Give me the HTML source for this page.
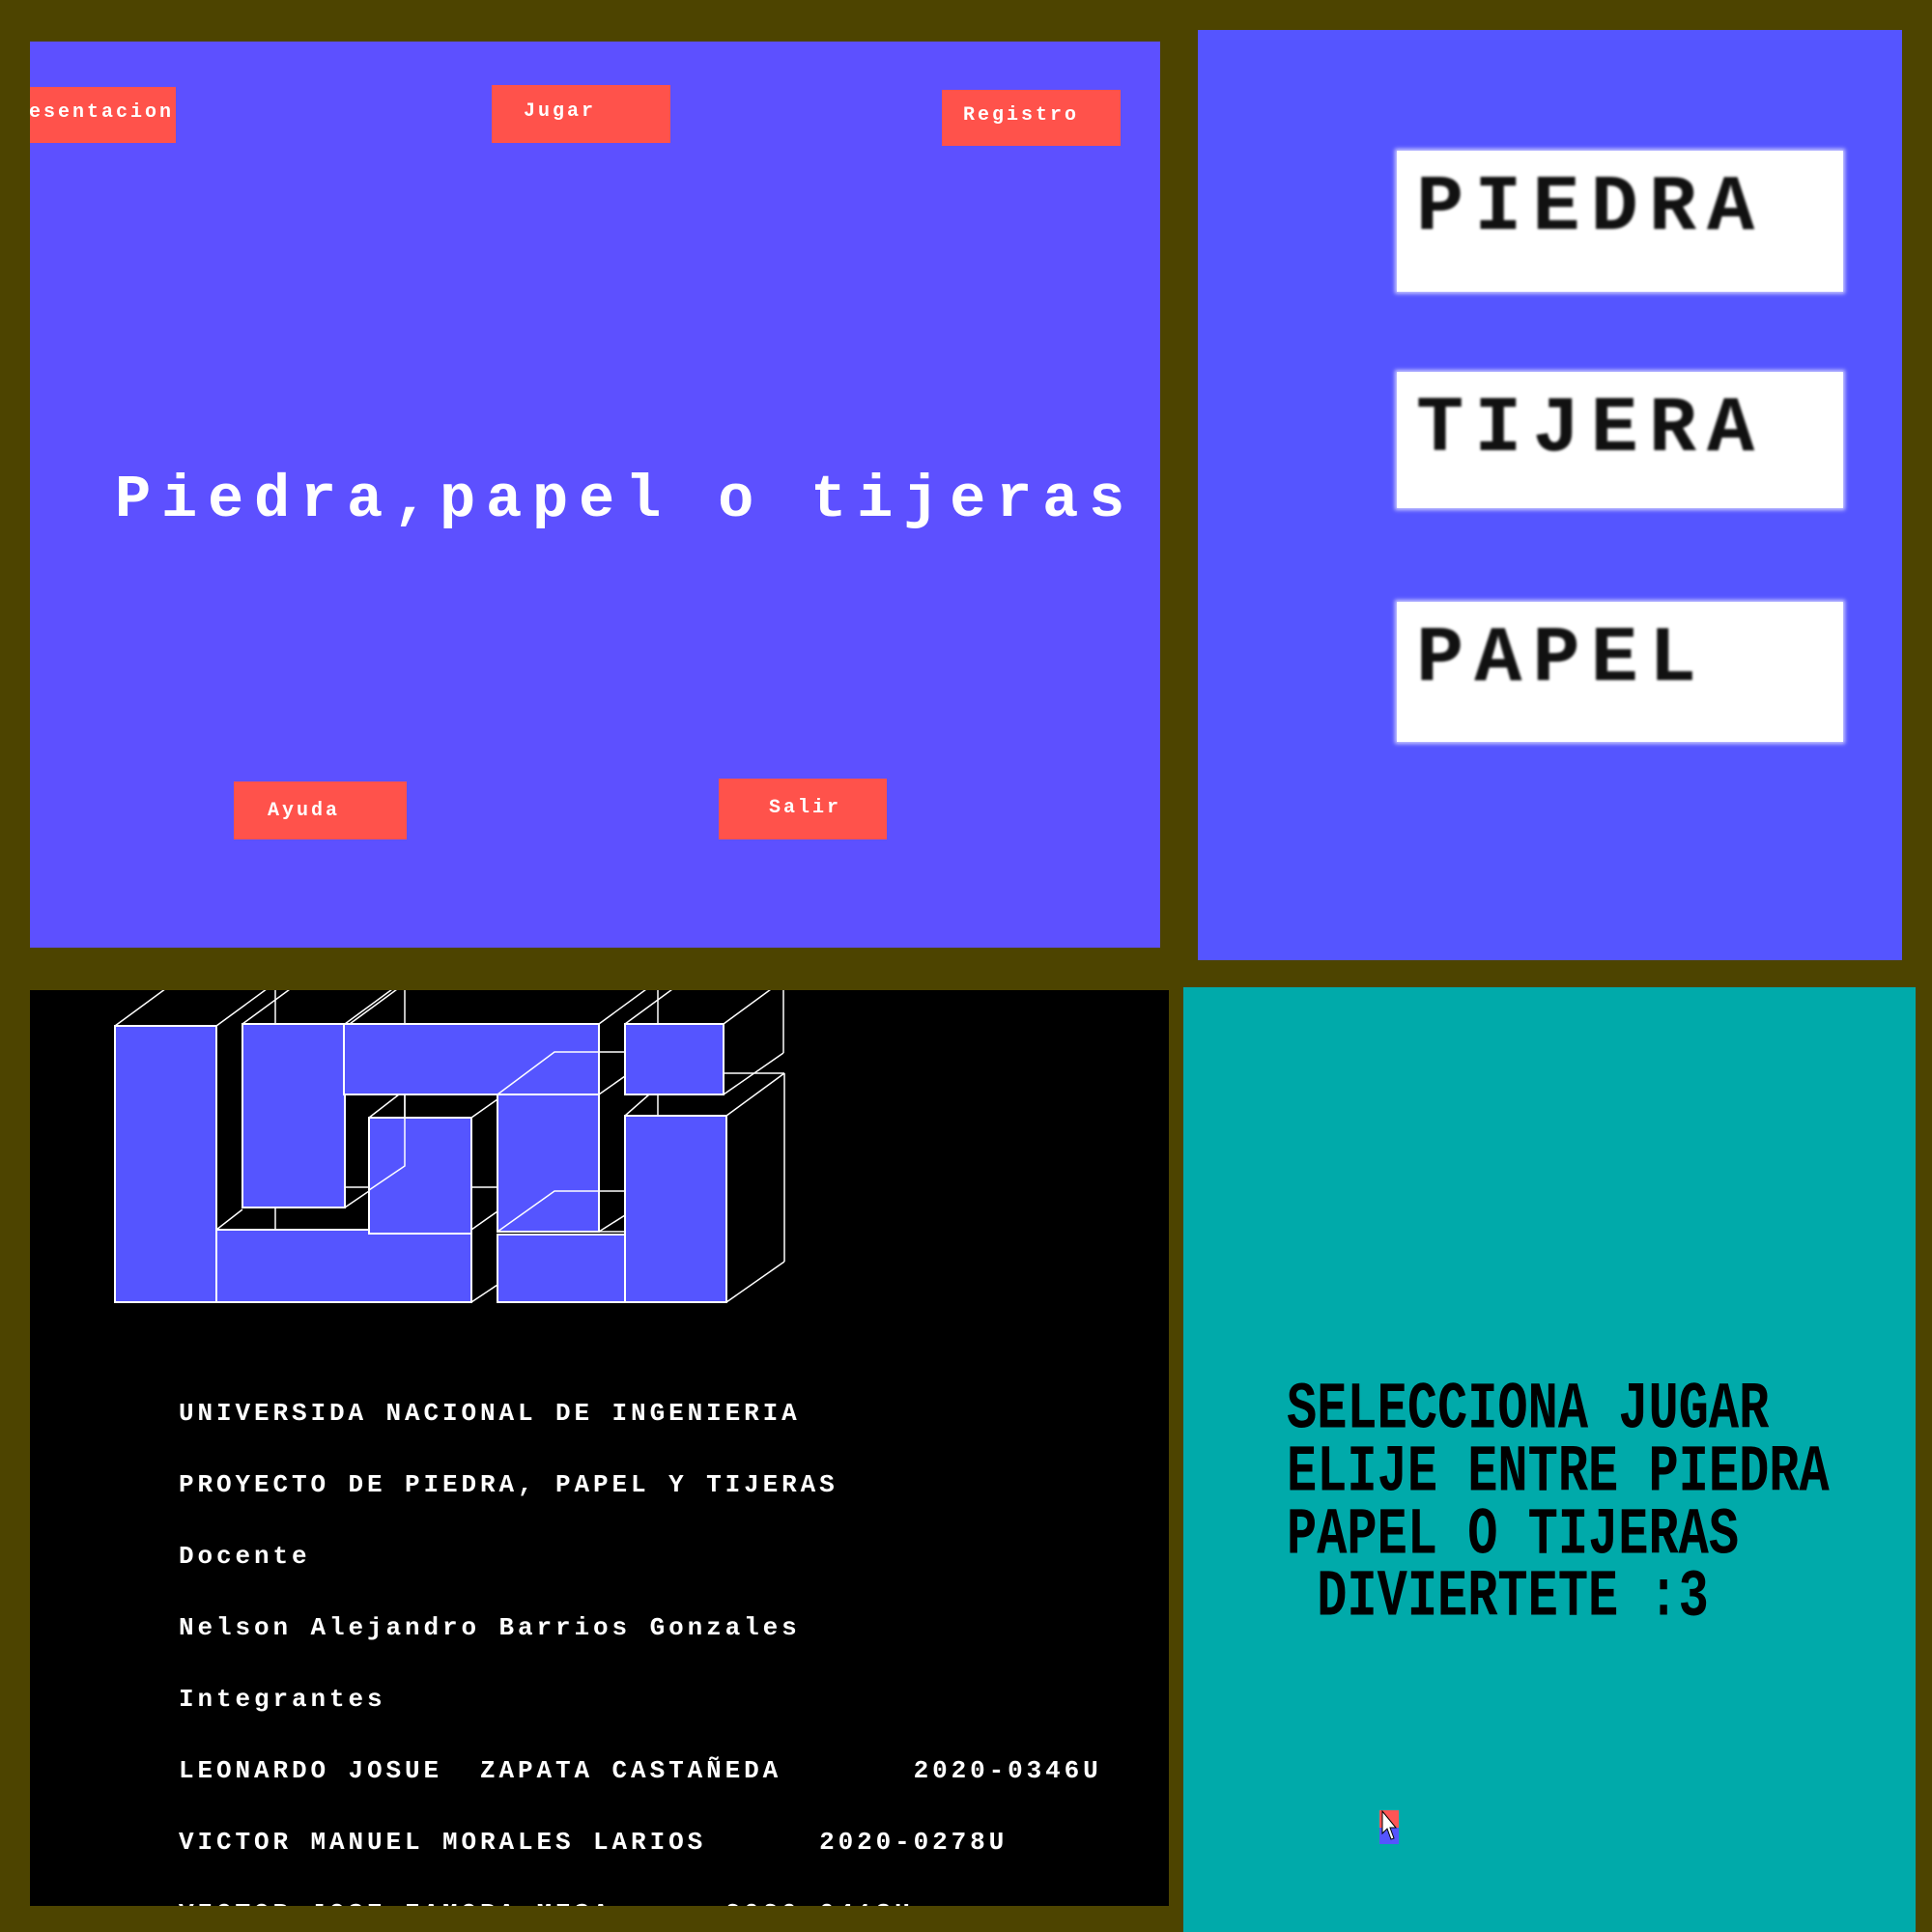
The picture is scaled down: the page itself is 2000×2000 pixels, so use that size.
<!DOCTYPE html>
<html><head><meta charset="utf-8"><style>
*{margin:0;padding:0;box-sizing:border-box}
body{width:2000px;height:2000px;background:#4d4400;position:relative;overflow:hidden;font-family:"Liberation Mono",monospace}
.p{position:absolute;overflow:hidden}
.btn{position:absolute;background:#ff524b;color:#fff;font-weight:bold;font-size:20px;letter-spacing:3px;white-space:pre;line-height:1}
.btn span{position:absolute}
.box{position:absolute;background:#fff;box-shadow:0 0 4px 2px rgba(255,255,255,.7);left:206px;width:462px}
.box span{position:absolute;left:20px;font-family:"Liberation Mono",monospace;font-weight:bold;font-size:82px;color:#111;letter-spacing:11px;line-height:1;filter:blur(1.2px)}
.bl{position:absolute;left:154px;color:#fff;font-size:26px;letter-spacing:3.9px;white-space:pre;line-height:1;font-weight:bold}
.br{position:absolute;left:107px;color:#000;font-size:52px;font-weight:bold;white-space:pre;line-height:1;transform-origin:0 0;transform:scaleY(1.32)}
</style></head><body>
<div class="p" style="left:31px;top:43px;width:1170px;height:938px;background:#5d50ff">
  <div class="btn" style="left:-1px;top:47px;width:152px;height:58px"><span style="left:0;top:17px">esentacion</span></div>
  <div class="btn" style="left:478px;top:45px;width:185px;height:60px"><span style="left:33px;top:18px">Jugar</span></div>
  <div class="btn" style="left:944px;top:50px;width:185px;height:58px"><span style="left:22px;top:17px">Registro</span></div>
  <div class="btn" style="left:211px;top:766px;width:179px;height:60px"><span style="left:35px;top:21px">Ayuda</span></div>
  <div class="btn" style="left:713px;top:763px;width:174px;height:63px"><span style="left:52px;top:21px">Salir</span></div>
  <div style="position:absolute;left:88px;top:444px;color:#fff;font-size:62px;font-weight:bold;letter-spacing:10.8px;white-space:pre;line-height:1">Piedra,papel o tijeras</div>
</div>
<div class="p" style="left:1240px;top:31px;width:729px;height:963px;background:#5555ff">
  <div class="box" style="top:125px;height:146px"><span style="top:19px">PIEDRA</span></div>
  <div class="box" style="top:354px;height:141px"><span style="top:19px">TIJERA</span></div>
  <div class="box" style="top:592px;height:145px"><span style="top:19px">PAPEL</span></div>
</div>
<div class="p" style="left:31px;top:1025px;width:1179px;height:948px;background:#000">
<svg width="1179" height="948" viewBox="31 1025 1179 948" style="position:absolute;left:0;top:0" fill="none" stroke="#fff" stroke-width="2">
 <g stroke-width="1.5">
  <line x1="119" y1="1062" x2="179" y2="1018"/><line x1="224" y1="1062" x2="284" y2="1018"/>
  <line x1="251" y1="1060" x2="311" y2="1016"/><line x1="357" y1="1060" x2="417" y2="1016"/>
  <line x1="362" y1="1060" x2="422" y2="1016"/>
  <line x1="620" y1="1060" x2="680" y2="1016"/><line x1="647" y1="1060" x2="707" y2="1016"/>
  <line x1="749" y1="1060" x2="809" y2="1016"/>
  <line x1="285" y1="1025" x2="285" y2="1060"/><line x1="419" y1="1025" x2="419" y2="1060"/>
  <line x1="681" y1="1025" x2="681" y2="1060"/><line x1="811" y1="1025" x2="811" y2="1090"/>
  <line x1="811" y1="1090" x2="749" y2="1133"/>
  <line x1="515" y1="1133" x2="574" y2="1089"/><line x1="574" y1="1089" x2="647" y2="1089"/>
  <line x1="620" y1="1133" x2="647" y2="1114"/>
  <line x1="681" y1="1133" x2="681" y2="1155"/>
  <line x1="647" y1="1155" x2="672" y2="1133"/>
  <line x1="419" y1="1133" x2="419" y2="1207"/><line x1="419" y1="1207" x2="382" y2="1232"/>
  <line x1="382" y1="1157" x2="413" y2="1133"/><line x1="488" y1="1157" x2="515" y2="1138"/>
  <line x1="357" y1="1229" x2="382" y2="1229"/><line x1="488" y1="1229" x2="515" y2="1229"/>
  <line x1="357" y1="1250" x2="382" y2="1233"/>
  <line x1="285" y1="1250" x2="285" y2="1273"/><line x1="224" y1="1273" x2="251" y2="1252"/>
  <line x1="488" y1="1273" x2="515" y2="1254"/><line x1="488" y1="1348" x2="515" y2="1330"/>
  <line x1="515" y1="1275" x2="574" y2="1233"/><line x1="574" y1="1233" x2="647" y2="1233"/>
  <line x1="620" y1="1275" x2="647" y2="1275"/><line x1="620" y1="1275" x2="647" y2="1258"/>
  <line x1="752" y1="1155" x2="812" y2="1111"/><line x1="749" y1="1111" x2="812" y2="1111"/>
  <line x1="812" y1="1111" x2="812" y2="1306"/><line x1="812" y1="1306" x2="752" y2="1348"/>
 </g>
 <g fill="#5555ff">
  <rect x="119" y="1062" width="105" height="286"/>
  <rect x="251" y="1060" width="106" height="190"/>
  <rect x="356" y="1060" width="264" height="73"/>
  <rect x="224" y="1273" width="264" height="75"/>
  <rect x="382" y="1157" width="106" height="120"/>
  <rect x="515" y="1133" width="105" height="142"/>
  <rect x="515" y="1278" width="132" height="70"/>
  <rect x="647" y="1060" width="102" height="73"/>
  <rect x="647" y="1155" width="105" height="193"/>
 </g>
 <g stroke-width="1.5">
  <polyline points="515,1133 574,1089 620,1089"/>
  <polyline points="515,1275 574,1233 620,1233"/>
  <polyline points="419,1133 419,1207 382,1232"/>
 </g>
</svg>
<div class="bl" style="top:425px">UNIVERSIDA NACIONAL DE INGENIERIA</div>
<div class="bl" style="top:499px">PROYECTO DE PIEDRA, PAPEL Y TIJERAS</div>
<div class="bl" style="top:573px">Docente</div>
<div class="bl" style="top:647px">Nelson Alejandro Barrios Gonzales</div>
<div class="bl" style="top:721px">Integrantes</div>
<div class="bl" style="top:795px">LEONARDO JOSUE  ZAPATA CASTAÑEDA       2020-0346U</div>
<div class="bl" style="top:869px">VICTOR MANUEL MORALES LARIOS      2020-0278U</div>
<div class="bl" style="top:943px">VICTOR JOSE ZAMORA MESA      2020-0418U</div>
</div>
<div class="p" style="left:1225px;top:1022px;width:758px;height:978px;background:#00aaaa">
<div class="br" style="top:404px">SELECCIONA JUGAR</div>
<div class="br" style="top:469px">ELIJE ENTRE PIEDRA</div>
<div class="br" style="top:534px">PAPEL O TIJERAS</div>
<div class="br" style="top:598px"> DIVIERTETE :3</div>
<div style="position:absolute;left:203px;top:852px;width:20px;height:18px;background:#ff5555"></div>
<div style="position:absolute;left:203px;top:870px;width:20px;height:17px;background:#5555ff"></div>
<svg style="position:absolute;left:203px;top:852px" width="20" height="35"><path d="M3 1 L3 24 L8 19 L12 30 L15 29 L11 18 L17 18 Z" fill="#fff" stroke="#000" stroke-width="1"/></svg>
</div>
</body></html>
